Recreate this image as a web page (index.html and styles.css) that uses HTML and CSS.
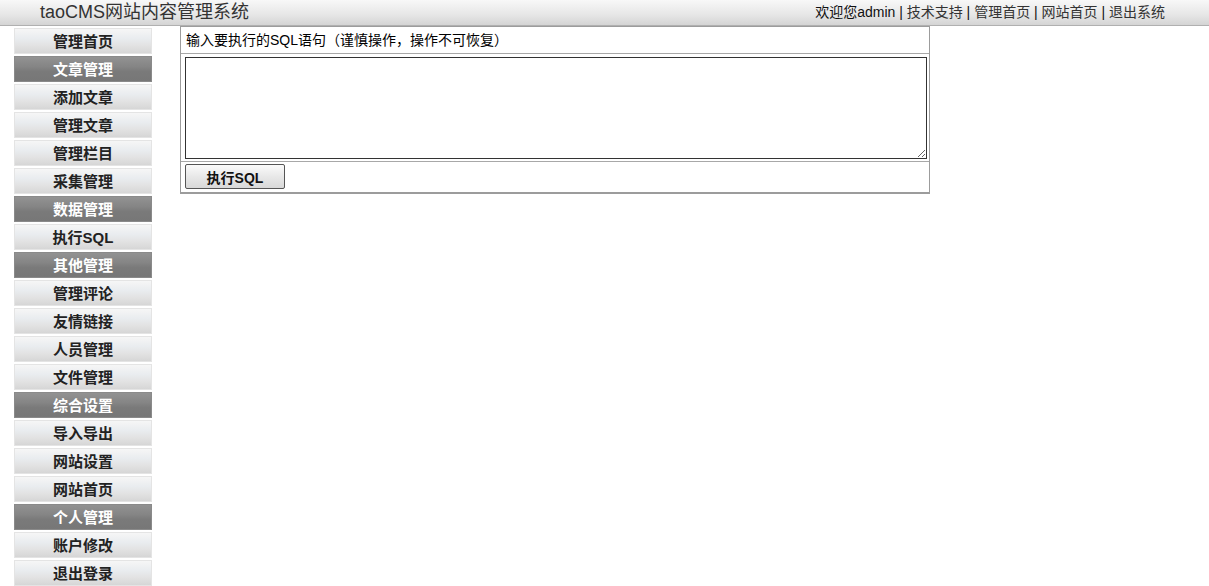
FILE: index.html
```html
<!DOCTYPE html>
<html lang="zh-CN">
<head>
<meta charset="utf-8">
<title>taoCMS网站内容管理系统</title>
<link rel="stylesheet" href="styles.css">
</head>
<body>
<header class="topbar">
  <div class="brand">taoCMS网站内容管理系统</div>
  <div class="userlinks">欢迎您admin | <a href="#">技术支持</a> | <a href="#">管理首页</a> | <a href="#">网站首页</a> | <a href="#">退出系统</a></div>
</header>
<div class="main">
  <nav class="sidebar">
    <a class="item" href="#">管理首页</a>
    <div class="item cat">文章管理</div>
    <a class="item" href="#">添加文章</a>
    <a class="item" href="#">管理文章</a>
    <a class="item" href="#">管理栏目</a>
    <a class="item" href="#">采集管理</a>
    <div class="item cat">数据管理</div>
    <a class="item" href="#">执行SQL</a>
    <div class="item cat">其他管理</div>
    <a class="item" href="#">管理评论</a>
    <a class="item" href="#">友情链接</a>
    <a class="item" href="#">人员管理</a>
    <a class="item" href="#">文件管理</a>
    <div class="item cat">综合设置</div>
    <a class="item" href="#">导入导出</a>
    <a class="item" href="#">网站设置</a>
    <a class="item" href="#">网站首页</a>
    <div class="item cat">个人管理</div>
    <a class="item" href="#">账户修改</a>
    <a class="item" href="#">退出登录</a>
  </nav>
  <form class="panel">
    <div class="row row-title">输入要执行的SQL语句（谨慎操作，操作不可恢复）</div>
    <div class="row row-input"><textarea class="sql"></textarea></div>
    <div class="row row-action"><button type="button" class="btn">执行SQL</button></div>
  </form>
</div>
</body>
</html>
```

FILE: styles.css
```css
html, body {
  margin: 0;
  padding: 0;
  background: #fff;
}
body {
  font-family: "Liberation Sans", Arial, "Noto Sans CJK SC", sans-serif;
  color: #000;
}
.topbar {
  height: 25px;
  border-bottom: 1px solid #b0b0b0;
  background: linear-gradient(#f8f8f8, #e6e6e6 60%, #d4d4d4);
  display: flex;
  align-items: center;
  justify-content: space-between;
  padding: 0 44px 0 40px;
}
.brand {
  font-size: 18px;
  color: #333;
  line-height: 25px;
}
.userlinks {
  font-size: 14px;
  color: #111;
  line-height: 25px;
}
.userlinks a {
  color: #333;
  text-decoration: none;
}
.main {
  display: flex;
  align-items: flex-start;
}
.sidebar {
  margin-left: 14px;
  width: 138px;
  padding-top: 2px;
  display: flex;
  flex-direction: column;
  gap: 2px;
}
.item {
  display: block;
  height: 26px;
  line-height: 26px;
  box-sizing: border-box;
  text-align: center;
  font-size: 15px;
  font-weight: bold;
  color: #222;
  text-decoration: none;
  border: 1px solid #e4e4e4;
  background: linear-gradient(#f6f6f6, #e9ecef 40%, #e2e2e2 70%, #d6d6d6);
}
.item.cat {
  color: #fff;
  border-color: #8a8a8a;
  background: linear-gradient(#929292, #858585 40%, #7a7a7a 60%, #777);
}
.panel {
  margin: 0 0 0 28px;
  width: 750px;
  box-sizing: border-box;
  border: 1px solid #9c9c9c;
  border-bottom-width: 2px;
}
.row {
  border-bottom: 1px solid #a8a8a8;
}
.row:last-child {
  border-bottom: 0;
}
.row-title {
  height: 26px;
  line-height: 26px;
  padding-left: 5px;
  font-size: 14px;
  color: #000;
}
.row-input {
  padding: 3px 0 2px 4px;
  line-height: 0;
}
.sql {
  width: 742px;
  height: 102px;
  box-sizing: border-box;
  border: 1px solid #333;
  margin: 0;
  padding: 2px;
  font-size: 13px;
  resize: both;
}
.row-action {
  height: 30px;
  box-sizing: border-box;
  padding: 2px 0 0 4px;
}
.btn {
  width: 100px;
  height: 25px;
  margin: 0;
  border: 1px solid #555;
  border-radius: 2px;
  background: linear-gradient(#fbfbfb, #e8e8e8 50%, #d8d8d8);
  font-family: "Liberation Sans", Arial, "Noto Sans CJK SC", sans-serif;
  font-size: 14px;
  font-weight: bold;
  color: #111;
  padding: 0;
}
```
